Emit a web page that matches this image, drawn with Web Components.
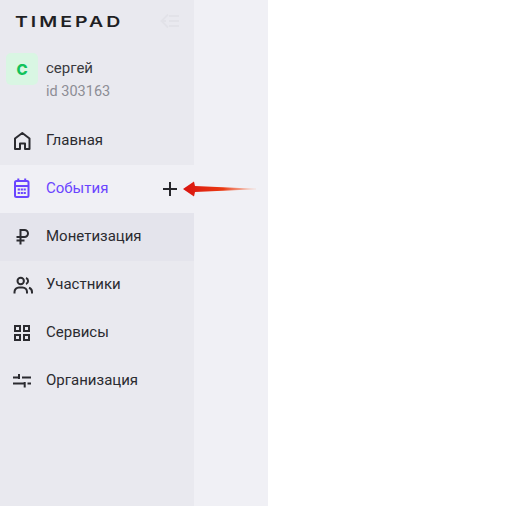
<!DOCTYPE html>
<html lang="ru">
<head>
<meta charset="utf-8">
<title>Timepad</title>
<style>
  html, body { margin: 0; height: 100%; background: #fff; }
  body { font-family: Roboto, "Liberation Sans", sans-serif; overflow: hidden; }
  svg { display: block; }
</style>
</head>
<body>
<tp-app>
  <tp-sidebar>
    <tp-user slot="user" name="сергей" uid="id 303163" letter="С"></tp-user>
    <tp-nav-item label="Главная">
      <svg slot="icon" width="24" height="24" viewBox="0 0 24 24" fill="none" stroke="currentColor" stroke-width="2" stroke-linejoin="round"><path d="M5 20V9.500L12.300 4l7.200 5.500V20H15v-5.500h-5V20z"/></svg>
    </tp-nav-item>
    <tp-nav-item label="События" active plus>
      <svg slot="icon" width="24" height="24" viewBox="0 0 24 24" fill="none" stroke="currentColor" stroke-width="2"><rect x="5" y="4" width="13.500" height="16" rx="1.500"/><path d="M5 9h13.500M8.300 1.500V5M15.200 1.500V5"/><path d="M7.700 12.500h2.200M10.700 12.500h2.200M13.600 12.500h2.200M7.700 16h2.200M10.700 16h2.200M13.600 16h2.200" stroke-width="2"/></svg>
    </tp-nav-item>
    <tp-nav-item label="Монетизация" hovered>
      <svg slot="icon" width="24" height="24" viewBox="0 0 24 24" fill="none" stroke="currentColor" stroke-width="2"><path d="M10.500 19.500V5h4a3.500 3.500 0 0 1 0 7H6.500M6.500 15.500h8"/></svg>
    </tp-nav-item>
    <tp-nav-item label="Участники">
      <svg slot="icon" width="24" height="24" viewBox="0 0 24 24" fill="none" stroke="currentColor" stroke-width="2"><circle cx="10.700" cy="8" r="3.200"/><path d="M4.500 20.500V19a4.500 4.500 0 0 1 4.500-4.500h3.500a4.500 4.500 0 0 1 4.500 4.500v1.500M16 5a3.200 3.200 0 0 1 0 6M19 14.800a4.500 4.500 0 0 1 3 4.200v1.500"/></svg>
    </tp-nav-item>
    <tp-nav-item label="Сервисы">
      <svg slot="icon" width="24" height="24" viewBox="0 0 24 24" fill="none" stroke="currentColor" stroke-width="2"><rect x="5" y="5" width="5" height="5"/><rect x="14" y="5" width="5" height="5"/><rect x="5" y="14" width="5" height="5"/><rect x="14" y="14" width="5" height="5"/></svg>
    </tp-nav-item>
    <tp-nav-item label="Организация">
      <svg slot="icon" width="24" height="24" viewBox="0 0 24 24" fill="none" stroke="currentColor" stroke-width="2"><path d="M3 8.500h6M12 8.500h9M9 5v5M3 14.500h11.700M17.500 14.500H21M14.700 13v5.500"/></svg>
    </tp-nav-item>
  </tp-sidebar>
  <svg class="pointer" slot="overlay" width="76" height="20" viewBox="0 0 76 20">
    <defs>
      <linearGradient id="shaft" x1="0" x2="1" y1="0" y2="0">
        <stop offset="0" stop-color="#d9130f"/>
        <stop offset=".55" stop-color="#ea3a12"/>
        <stop offset="1" stop-color="#f9b9a0" stop-opacity=".5"/>
      </linearGradient>
    </defs>
    <path d="M1 10 12 2.500 13 7 74 9.700V10.300L13 13 12 17.500z" fill="url(#shaft)"/>
  </svg>
</tp-app>

<script>
class TpApp extends HTMLElement {
  constructor() {
    super();
    this.attachShadow({ mode: 'open' });
    this.shadowRoot.innerHTML = `
      <style>
        :host { display: grid; grid-template-columns: 194px 74px 1fr; height: 506px; position: relative; }
        .second { background: #f0f0f5; }
        .overlay { position: absolute; left: 182px; top: 179px; }
      </style>
      <slot name="sidebar"></slot>
      <div class="second"></div>
      <div></div>
      <div class="overlay"><slot name="overlay"></slot></div>
    `;
  }
  connectedCallback() {
    for (const el of this.children) {
      if (el.tagName === 'TP-SIDEBAR') el.slot = 'sidebar';
    }
  }
}

class TpLogo extends HTMLElement {
  constructor() {
    super();
    this.attachShadow({ mode: 'open' });
    this.shadowRoot.innerHTML = `
      <style>
        :host { display: flex; align-items: center; justify-content: space-between; height: 42px; padding: 0 15px 0 15px; }
        .word { font: 600 15px/1 Inter, sans-serif; letter-spacing: 2.300px; color: #1f1f24; transform: scaleX(1.300); transform-origin: left center; }
        .back { color: #e2e2e8; }
      </style>
      <span class="word">TIMEPAD</span>
      <svg class="back" width="19" height="16" viewBox="0 0 19 16" fill="none" stroke="currentColor" stroke-width="1.800"><path d="M8 1.500 1.500 8 8 14.500M2 8h4M9 3h10M9 8h10M9 13h10"/></svg>
    `;
  }
}

class TpUser extends HTMLElement {
  constructor() {
    super();
    this.attachShadow({ mode: 'open' });
    this.shadowRoot.innerHTML = `
      <style>
        :host { display: flex; gap: 8px; padding: 11px 6px 0; height: 64px; box-sizing: border-box; }
        .avatar { width: 32px; height: 32px; border-radius: 5px; background: #d9f6e3; color: #12c25a;
                  display: flex; align-items: center; justify-content: center; font: 800 15px Inter, sans-serif; }
        .info { display: flex; flex-direction: column; gap: 6px; font-size: 15px; line-height: 18px; margin-top: 6px; }
        .name { color: #3a3a40; }
        .uid { color: #8d8d95; font-size: 14.500px; }
      </style>
      <div class="avatar"></div>
      <div class="info"><div class="name"></div><div class="uid"></div></div>
    `;
  }
  connectedCallback() {
    const root = this.shadowRoot;
    root.querySelector('.avatar').textContent = this.getAttribute('letter') || '';
    root.querySelector('.name').textContent = this.getAttribute('name') || '';
    root.querySelector('.uid').textContent = this.getAttribute('uid') || '';
  }
}

class TpNavItem extends HTMLElement {
  constructor() {
    super();
    this.attachShadow({ mode: 'open' });
    this.shadowRoot.innerHTML = `
      <style>
        :host { display: flex; align-items: center; height: 48px; padding: 0 16px 0 10px; gap: 12px; color: #2b2b30; font-size: 15px; }
        :host([active]) { background: #f0f0f5; color: #6a45ff; }
        :host([hovered]) { background: #e4e4ec; }
        .icon { width: 24px; height: 24px; flex: none; }
        .label { flex: 1; padding-bottom: 2px; }
        .plus { color: #26262b; display: none; }
        :host([plus]) .plus { display: block; }
      </style>
      <span class="icon"><slot name="icon"></slot></span>
      <span class="label"></span>
      <svg class="plus" width="16" height="16" viewBox="0 0 16 16" fill="none" stroke="currentColor" stroke-width="2"><path d="M8 1v14M1 8h14"/></svg>
    `;
  }
  connectedCallback() {
    this.shadowRoot.querySelector('.label').textContent = this.getAttribute('label') || '';
  }
}

class TpSidebar extends HTMLElement {
  constructor() {
    super();
    this.attachShadow({ mode: 'open' });
    this.shadowRoot.innerHTML = `
      <style>
        :host { display: flex; flex-direction: column; background: #e9e9ef; }
        .user { padding-bottom: 11px; }
      </style>
      <tp-logo></tp-logo>
      <div class="user"><slot name="user"></slot></div>
      <slot></slot>
    `;
  }
}

customElements.define('tp-logo', TpLogo);
customElements.define('tp-user', TpUser);
customElements.define('tp-nav-item', TpNavItem);
customElements.define('tp-sidebar', TpSidebar);
customElements.define('tp-app', TpApp);
</script>
</body>
</html>
